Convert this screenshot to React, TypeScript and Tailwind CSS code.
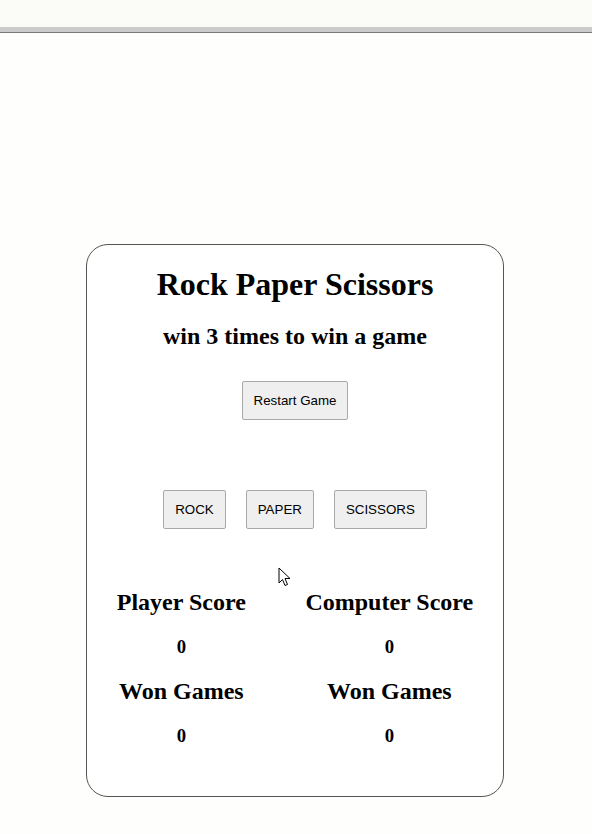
export default function App() {
  const btn =
    "h-[39px] bg-[#efefef] border border-[#a9a9a9] rounded-[2px] px-[11px] text-[13.33px] leading-[16px] text-black font-['Liberation_Sans',Arial,sans-serif]";

  return (
    <div className="min-h-[834px] w-[592px] bg-[#fefffd] relative font-['Liberation_Serif','Times_New_Roman',serif] text-black">
      {/* browser chrome strip */}
      <div className="h-[27px] bg-[#fbfcf8]" />
      <div className="h-[5px] bg-[#cbcbcb]" />
      <div className="h-[1px] bg-[#7a7a7a]" />

      <div className="ml-[86px] mt-[211px] w-[418px] h-[553px] border border-[#555] rounded-[22px] bg-white flex flex-col items-center">
        <h1 className="mt-[21px] text-[32px] leading-[37px] font-bold">Rock Paper Scissors</h1>
        <h2 className="mt-[19px] text-[24px] leading-[28px] font-bold">win 3 times to win a game</h2>
        <button className={`${btn} mt-[31px]`}>Restart Game</button>

        <div className="mt-[70px] flex gap-[20px]">
          <button className={btn}>ROCK</button>
          <button className={btn}>PAPER</button>
          <button className={btn}>SCISSORS</button>
        </div>

        <div className="mt-[59px] w-full flex justify-around">
          <div className="flex flex-col items-center">
            <h2 className="text-[24px] leading-[28px] font-bold">Player Score</h2>
            <h3 className="mt-[20px] text-[18.72px] leading-[22px] font-bold">0</h3>
            <h2 className="mt-[19px] text-[24px] leading-[28px] font-bold">Won Games</h2>
            <h3 className="mt-[20px] text-[18.72px] leading-[22px] font-bold">0</h3>
          </div>
          <div className="flex flex-col items-center">
            <h2 className="text-[24px] leading-[28px] font-bold">Computer Score</h2>
            <h3 className="mt-[20px] text-[18.72px] leading-[22px] font-bold">0</h3>
            <h2 className="mt-[19px] text-[24px] leading-[28px] font-bold">Won Games</h2>
            <h3 className="mt-[20px] text-[18.72px] leading-[22px] font-bold">0</h3>
          </div>
        </div>
      </div>

      {/* mouse pointer */}
      <svg className="absolute left-[278px] top-[567px]" width="13" height="20" viewBox="0 0 13 20">
        <path d="M1 1 L1 16 L4.5 12.5 L7 18.5 L9.5 17.5 L7 11.5 L12 11.5 Z" fill="white" stroke="black" strokeWidth="1" strokeLinejoin="round" />
      </svg>
    </div>
  );
}
